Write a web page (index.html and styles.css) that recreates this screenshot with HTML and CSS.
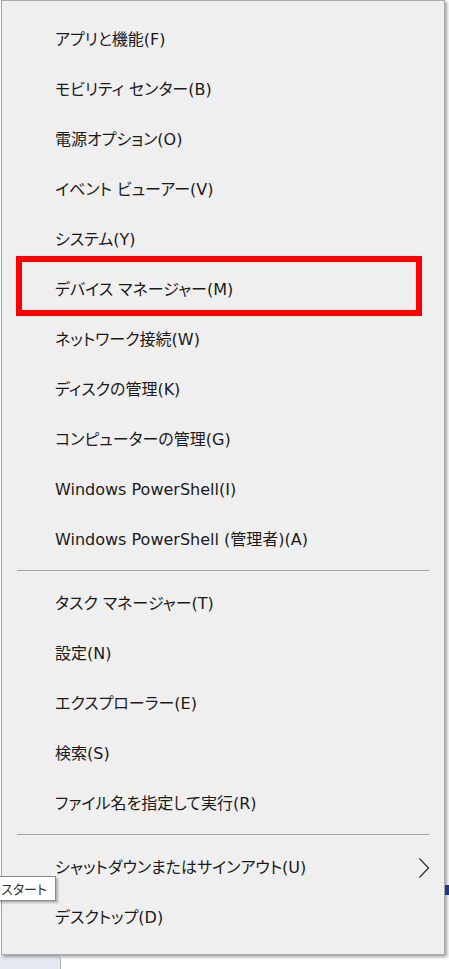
FILE: index.html
```html
<!DOCTYPE html>
<html lang="ja">
<head>
<meta charset="utf-8">
<title>Menu</title>
<link rel="stylesheet" href="styles.css">
</head>
<body>
<div class="screen">
  <div class="menu">
    <div class="group">
      <div class="item">アプリと機能(F)</div>
      <div class="item">モビリティ センター(B)</div>
      <div class="item">電源オプション(O)</div>
      <div class="item">イベント ビューアー(V)</div>
      <div class="item">システム(Y)</div>
      <div class="item">デバイス マネージャー(M)</div>
      <div class="item">ネットワーク接続(W)</div>
      <div class="item">ディスクの管理(K)</div>
      <div class="item">コンピューターの管理(G)</div>
      <div class="item">Windows PowerShell(I)</div>
      <div class="item">Windows PowerShell (管理者)(A)</div>
    </div>
    <div class="sep"></div>
    <div class="group">
      <div class="item">タスク マネージャー(T)</div>
      <div class="item">設定(N)</div>
      <div class="item">エクスプローラー(E)</div>
      <div class="item">検索(S)</div>
      <div class="item">ファイル名を指定して実行(R)</div>
    </div>
    <div class="sep"></div>
    <div class="group">
      <div class="item has-sub"><span>シャットダウンまたはサインアウト(U)</span>
        <svg class="chev" width="12" height="22" viewBox="0 0 12 22"><polyline points="1.5,1.5 10.5,11 1.5,20.5" fill="none" stroke="#333" stroke-width="1.3"/></svg>
      </div>
      <div class="item">デスクトップ(D)</div>
    </div>
  </div>
  <div class="below">
    <div class="below-left"></div>
    <div class="below-right"></div>
  </div>
  <div class="bluebit"></div>
  <div class="tooltip">スタート</div>
  <div class="highlight"></div>
</div>
</body>
</html>
```

FILE: styles.css
```css
html, body {
  margin: 0;
  padding: 0;
  background: #ffffff;
}
.screen {
  position: relative;
  width: 449px;
  height: 969px;
  overflow: hidden;
  background: #fbfbfb;
  font-family: "DejaVu Sans", "Noto Sans CJK JP", sans-serif;
  font-feature-settings: "palt";
  color: #1a1a1a;
}
.menu {
  position: relative;
  z-index: 1;
  box-sizing: border-box;
  margin-left: 1px;
  width: 444px;
  height: 955px;
  padding: 14px 0 60px;
  background: #efefef;
  border: 1px solid #a9a9a9;
  box-shadow: 2px 2px 3px rgba(0, 0, 0, 0.35);
}
.item {
  height: 50px;
  display: flex;
  align-items: center;
  padding-left: 53px;
  font-size: 16px;
  line-height: 1;
  white-space: nowrap;
}
.has-sub {
  justify-content: space-between;
  padding-right: 14px;
}
.chev {
  display: block;
}
.sep {
  height: 1px;
  margin: 5px 15px 8px;
  background: #a3a3a3;
}
.below {
  display: flex;
  height: 14px;
}
.below-left {
  width: 60px;
  background: #e6e9f1;
}
.below-right {
  flex: 1;
  background: #ffffff;
  border-left: 1px solid #b5b5b5;
  margin-top: 3px;
}
.bluebit {
  position: absolute;
  z-index: 2;
  left: 445px;
  top: 885px;
  width: 4px;
  height: 10px;
  background: #1d3a7e;
}
.tooltip {
  position: absolute;
  z-index: 2;
  left: -2px;
  top: 876px;
  box-sizing: border-box;
  width: 58px;
  height: 25px;
  padding-right: 8px;
  display: flex;
  align-items: center;
  justify-content: flex-end;
  white-space: nowrap;
  background: #ffffff;
  border: 1px solid #8a8a8a;
  box-shadow: 2px 2px 2px rgba(0, 0, 0, 0.25);
  font-family: "Noto Sans CJK JP", sans-serif;
  font-size: 13px;
  color: #333333;
}
.highlight {
  position: absolute;
  z-index: 3;
  left: 16px;
  top: 256px;
  box-sizing: border-box;
  width: 406px;
  height: 60px;
  border: 6px solid #ff0000;
}
```
